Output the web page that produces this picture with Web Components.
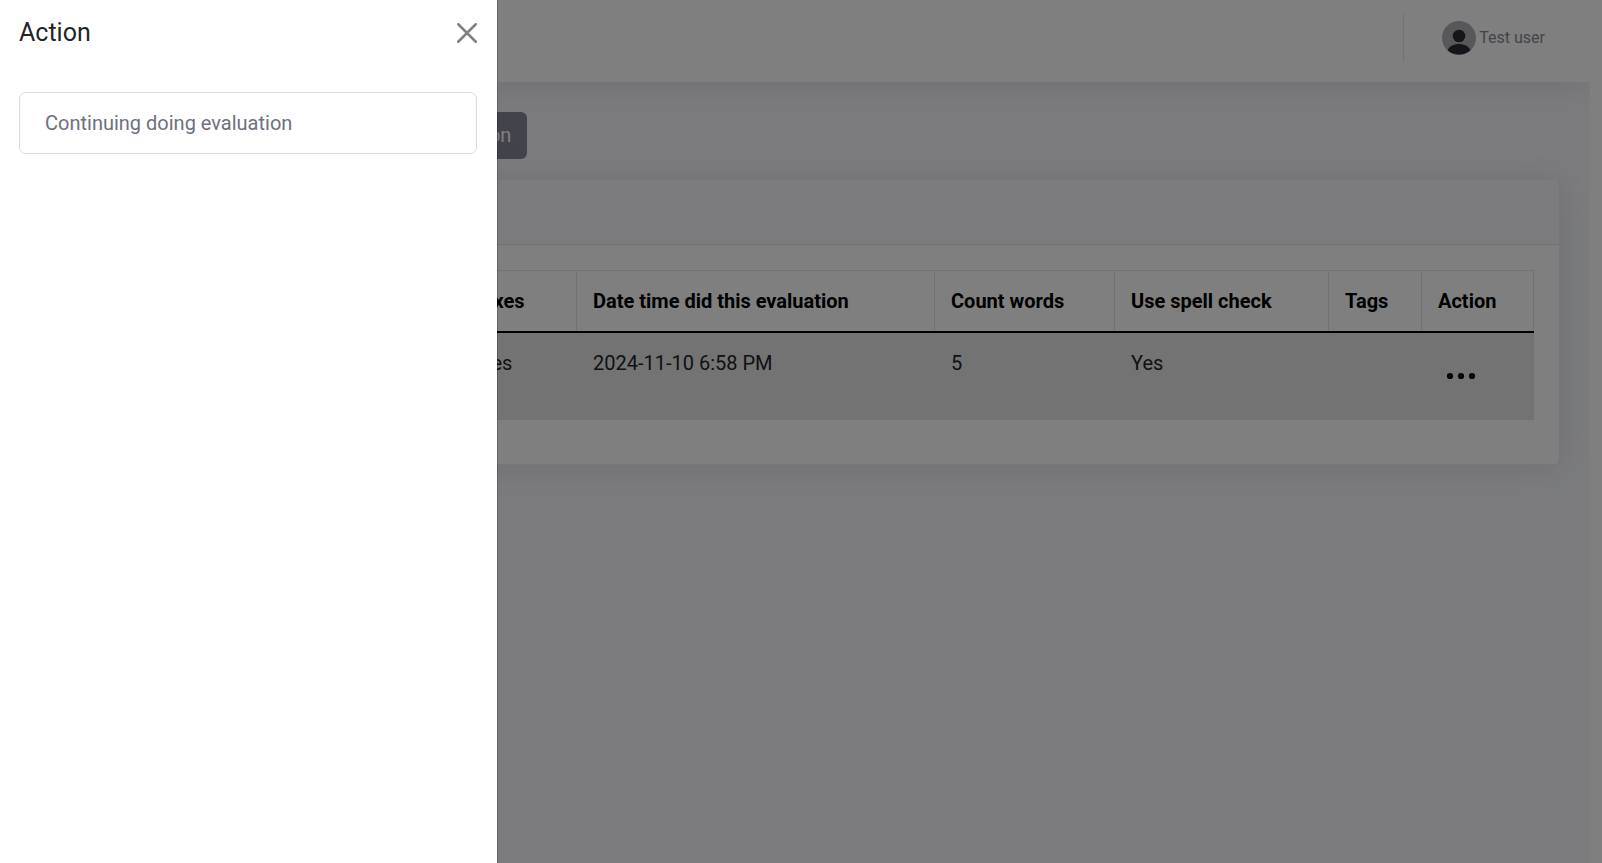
<!DOCTYPE html>
<html lang="en">
<head>
<meta charset="utf-8">
<meta name="viewport" content="width=device-width, initial-scale=1">
<title>Evaluations</title>
<style>
  body { margin: 0; font-family: Roboto, "Liberation Sans", sans-serif; font-size: 20px; line-height: 30px; color: #212529; background: #fff; }
</style>
</head>
<body>
<app-shell>
  <top-bar slot="header"><user-menu>Test user</user-menu></top-bar>
  <action-button>Action</action-button>
  <data-card><evaluation-table></evaluation-table></data-card>
</app-shell>
<action-drawer heading="Action">
  <drawer-item>Continuing doing evaluation</drawer-item>
</action-drawer>

<script>
const define = (name, html, setup) => customElements.define(name, class extends HTMLElement {
  connectedCallback() {
    if (this.shadowRoot) return;
    const template = document.createElement('template');
    template.innerHTML = html;
    this.attachShadow({ mode: 'open' }).append(template.content.cloneNode(true));
    if (setup) setup(this, this.shadowRoot);
  }
});

define('app-shell', `
  <style>
    :host { display: flex; flex-direction: column; min-height: 100vh; margin-right: 12px; background: #f8f9fc; overflow: hidden; }
    main { display: flex; flex-direction: column; align-items: flex-start; gap: 20px; padding: 30px 30px 30px 438px; }
  </style>
  <slot name="header"></slot>
  <main><slot></slot></main>`);

define('top-bar', `
  <style>
    :host { display: block; box-shadow: 0 3px 35px rgba(58,59,69,.15); }
    header { box-sizing: border-box; height: 82px; padding: 14px 45px 20px; background: #fff; display: flex; justify-content: flex-end; align-items: stretch; }
    .rule { width: 1px; background: #e3e6f0; margin-right: 38px; }
  </style>
  <header><span class="rule"></span><slot></slot></header>`);

define('user-menu', `
  <style>
    :host { display: flex; }
    a { display: flex; align-items: center; gap: 3px; font-size: 16px; line-height: 24px; color: #858796; text-decoration: none; }
    svg { width: 34px; height: 34px; }
  </style>
  <a href="#">
    <svg viewBox="0 0 34 34" aria-hidden="true">
      <circle cx="17" cy="17" r="17" fill="#b0b1b6"/>
      <circle cx="17" cy="15" r="6.3" fill="#2b2d33"/>
      <path d="M5.6 29.2C7.5 25.2 11.4 23 17 23s9.500 2.200 11.400 6.200A17 17 0 0 1 5.600 29.200Z" fill="#2b2d33"/>
    </svg>
    <slot></slot>
  </a>`);

define('action-button', `
  <style>
    :host { display: block; }
    button { display: block; font: inherit; line-height: 31px; color: #fff; background: #858796; border: 0; border-radius: 6px; padding: 8px 16px; }
  </style>
  <button type="button"><slot></slot></button>`);

define('data-card', `
  <style>
    :host { display: block; box-sizing: border-box; align-self: stretch; border: 1px solid #eceef3; border-radius: 6px; background: #fff; box-shadow: 0 3px 35px rgba(58,59,69,.15); }
    header { height: 64px; background: #f8f9fc; border-bottom: 1px solid #e3e6f0; border-radius: 6px 6px 0 0; }
    .body { padding: 25px 25px 44px; }
  </style>
  <header></header>
  <div class="body"><slot></slot></div>`);

define('evaluation-table', `
  <style>
    :host { display: block; }
    table { width: 100%; table-layout: fixed; border-collapse: separate; border-spacing: 0; }
    th, td { text-align: left; vertical-align: top; padding: 15px 16px; }
    th { font-weight: 700; color: #000; border-top: 1px solid #e3e6f0; border-right: 1px solid #e6e6ea; }
    td { background: #e6e6e6; border-top: 2px solid #000; }
    .axes { width: 80px; } .words { width: 147px; } .spell { width: 181px; } .tags { width: 60px; } .action { width: 79px; }
    button { display: flex; align-items: center; padding: 0 8px; height: 55px; margin-bottom: 2px; border: 0; background: none; color: #000; }
    svg { width: 30px; height: 8px; }
  </style>
  <table>
    <thead><tr>
      <th class="axes" scope="col">Axes</th>
      <th scope="col">Date time did this evaluation</th>
      <th class="words" scope="col">Count words</th>
      <th class="spell" scope="col">Use spell check</th>
      <th class="tags" scope="col">Tags</th>
      <th class="action" scope="col">Action</th>
    </tr></thead>
    <tbody><tr>
      <td>Yes</td>
      <td>2024-11-10 6:58 PM</td>
      <td>5</td>
      <td>Yes</td>
      <td></td>
      <td><button type="button" aria-label="Row actions"><svg viewBox="0 0 30 8" fill="currentColor"><circle cx="4" cy="4" r="3.100"/><circle cx="15" cy="4" r="3.100"/><circle cx="26" cy="4" r="3.100"/></svg></button></td>
    </tr></tbody>
  </table>`);

define('action-drawer', `
  <style>
    :host { display: block; position: fixed; inset: 0; z-index: 10; background: rgba(0,0,0,.5); }
    aside { box-sizing: border-box; width: 498px; max-width: 100%; height: 100%; padding: 18px 20px 20px 19px; background: #fff; background-clip: padding-box; border-right: 1px solid rgba(0,0,0,.2); }
    header { display: flex; justify-content: space-between; align-items: center; margin-bottom: 44px; }
    h2 { margin: 0; font-size: 25px; line-height: 30px; font-weight: 400; }
    button { display: flex; padding: 0; border: 0; background: none; color: #808080; }
    svg { width: 20px; height: 20px; }
  </style>
  <aside role="dialog" aria-labelledby="title">
    <header>
      <h2 id="title"></h2>
      <button type="button" aria-label="Close"><svg viewBox="0 0 20 20" fill="none" stroke="currentColor" stroke-width="2.500" stroke-linecap="round"><path d="M1.250 1.250 18.750 18.750M18.750 1.250 1.250 18.750"/></svg></button>
    </header>
    <slot></slot>
  </aside>`, (host, root) => {
    root.querySelector('h2').textContent = host.getAttribute('heading');
    root.querySelector('button').addEventListener('click', () => { host.style.display = 'none'; });
  });

define('drawer-item', `
  <style>
    :host { display: block; }
    a { display: block; padding: 15px 25px; border: 1px solid #dcdcdf; border-radius: 7px; color: #6e707e; text-decoration: none; }
  </style>
  <a href="#"><slot></slot></a>`);
</script>
</body>
</html>
